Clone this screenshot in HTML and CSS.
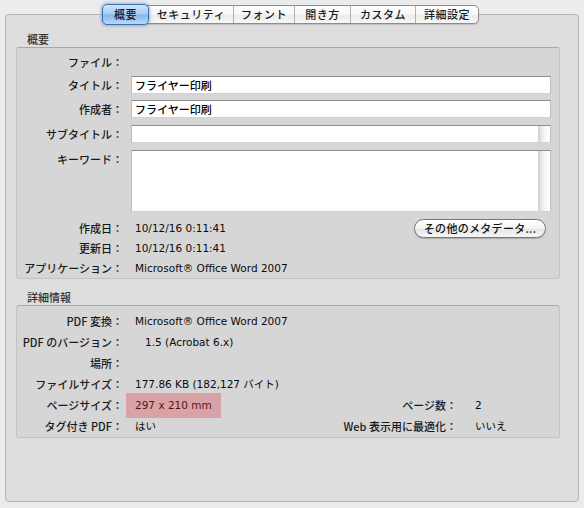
FILE: index.html
```html
<!DOCTYPE html>
<html lang="ja">
<head>
<meta charset="utf-8">
<title>文書のプロパティ</title>
<link rel="stylesheet" href="styles.css">
</head>
<body>
<div class="window">
  <div class="tabs">
    <div class="tab selected">概要</div>
    <div class="tab">セキュリティ</div>
    <div class="tab">フォント</div>
    <div class="tab">開き方</div>
    <div class="tab">カスタム</div>
    <div class="tab">詳細設定</div>
  </div>
  <div class="panel">
    <div class="sec-title">概要</div>
    <div class="box summary">
      <div class="row r-file"><div class="lbl">ファイル：</div><div class="val"></div></div>
      <div class="row r-title"><div class="lbl">タイトル：</div><div class="field">フライヤー印刷</div></div>
      <div class="row r-author"><div class="lbl">作成者：</div><div class="field">フライヤー印刷</div></div>
      <div class="row r-subtitle"><div class="lbl">サブタイトル：</div><div class="field scroll"></div></div>
      <div class="row r-keywords"><div class="lbl">キーワード：</div><div class="field scroll area"></div></div>
      <div class="row r-info first"><div class="lbl">作成日：</div><div class="val split"><span>10/12/16 0:11:41</span><button class="btn" type="button">その他のメタデータ...</button></div></div>
      <div class="row r-info"><div class="lbl">更新日：</div><div class="val">10/12/16 0:11:41</div></div>
      <div class="row r-info"><div class="lbl">アプリケーション：</div><div class="val">Microsoft® Office Word 2007</div></div>
    </div>
    <div class="sec-title second">詳細情報</div>
    <div class="box details">
      <div class="lbl d-lbl">PDF 変換：</div><div class="val d-val">Microsoft® Office Word 2007</div>
      <div class="lbl d-lbl">PDF のバージョン：</div><div class="val d-val indent">1.5 (Acrobat 6.x)</div>
      <div class="lbl d-lbl">場所：</div><div class="val d-val"></div>
      <div class="lbl d-lbl">ファイルサイズ：</div><div class="val d-val">177.86 KB (182,127 バイト)</div>
      <div class="lbl d-lbl">ページサイズ：</div><div class="val d-val"><span class="hl">297 x 210 mm</span></div>
      <div class="lbl r-lbl">ページ数：</div><div class="val r-val">2</div>
      <div class="lbl d-lbl">タグ付き PDF：</div><div class="val d-val">はい</div>
      <div class="lbl r-lbl">Web 表示用に最適化：</div><div class="val r-val">いいえ</div>
    </div>
  </div>
</div>
</body>
</html>
```
FILE: styles.css
```css
* { box-sizing: border-box; }
html, body { margin: 0; padding: 0; }
body {
  background: #ececec;
  font-family: "Noto Sans CJK JP", "Noto Sans", sans-serif;
  font-size: 11px;
  font-weight: 500;
  color: #111;
}
.window {
  height: 508px;
  padding: 5px 5px 6px 5px;
  display: flex;
  flex-direction: column;
}
.tabs {
  position: relative;
  z-index: 1;
  align-self: flex-start;
  margin-left: 97px;
  margin-bottom: -10px;
  display: grid;
  grid-template-columns: 46px 84px 61px 56px 65px 63px;
  height: 19px;
  border: 1px solid #8c8c8c;
  border-radius: 5px;
  background: linear-gradient(#ffffff, #f6f6f6 50%, #ebebeb 52%, #f7f7f7);
  box-shadow: 0 1px 1px rgba(0,0,0,0.15);
}
.tab {
  display: flex;
  align-items: center;
  justify-content: center;
  line-height: 17px;
  border-left: 1px solid #b2b2b2;
  color: #1a1a1a;
  letter-spacing: 0.5px;
}
.tab:first-child { border-left: none; }
.tab.selected {
  margin: -2px 0 -2px -1px;
  border: 1px solid #3f6fb4;
  border-radius: 5px;
  background: linear-gradient(#d3e5fa, #a7cbf4 48%, #86b5ee 52%, #b9d9f9);
  box-shadow: 0 0 3px 1px rgba(70,130,215,0.55);
}
.tab.selected + .tab { border-left: none; }
.panel {
  flex: 1;
  border: 1px solid #b4b4b4;
  border-radius: 4px;
  background: #dedede;
  padding: 16px 18px 0 10px;
}
.sec-title {
  line-height: 16px;
  height: 16px;
  margin-left: 11px;
  color: #333;
}
.sec-title.second { margin-top: 10px; }
.box {
  background: #d6d6d6;
  border: 1px solid #c2c2c2;
  border-top-color: #a8a8a8;
  border-radius: 3px;
}
.summary {
  padding: 5px 8px 0 0;
  display: flex;
  flex-direction: column;
}
.row {
  display: grid;
  grid-template-columns: 114px 1fr;
  height: 18px;
}
.lbl {
  text-align: right;
  padding-right: 8px;
  white-space: nowrap;
  color: #1a1a1a;
}
.row .lbl { line-height: 18px; }
.val {
  padding-left: 4px;
  font-family: "DejaVu Sans", "Noto Sans CJK JP", sans-serif;
  font-size: 10.5px;
  font-weight: 400;
  white-space: nowrap;
  color: #0a0a0a;
}
.row .val { line-height: 18px; }
.r-title { margin-top: 5px; }
.r-author { margin-top: 6px; }
.r-subtitle { margin-top: 7px; }
.r-keywords { margin-top: 7px; height: 62px; }
.r-info { height: 19px; margin-top: 1px; }
.r-info.first { margin-top: 7px; }
.r-info .lbl, .r-info .val { line-height: 19px; }
.field {
  background: #fff;
  border: 1px solid #bcbcbc;
  border-top-color: #8f8f8f;
  border-bottom-color: #d2d2d2;
  padding-left: 3px;
  line-height: 16px;
  color: #000;
}
.field.scroll {
  background: linear-gradient(to right, #fff calc(100% - 12px), #cfcfcf calc(100% - 12px), #ececec calc(100% - 8px), #fbfbfb calc(100% - 3px), #fff);
}
.split {
  display: flex;
  justify-content: space-between;
  align-items: center;
}
.btn {
  width: 132px;
  height: 19px;
  margin-right: 5px;
  padding: 0;
  border: 1px solid #777;
  border-radius: 10px;
  background: linear-gradient(#ffffff, #f4f4f4 50%, #e6e6e6 52%, #f6f6f6);
  box-shadow: 0 1px 1px rgba(0,0,0,0.2);
  font-family: "Noto Sans CJK JP", sans-serif;
  font-size: 11px;
  font-weight: 500;
  line-height: 17px;
  color: #111;
  letter-spacing: 0.3px;
}
.details {
  padding-top: 5px;
  display: grid;
  grid-template-columns: 114px 1fr 140px 84px;
  grid-auto-rows: 21px;
}
.details .lbl, .details .val { line-height: 21px; }
.d-lbl { grid-column: 1; }
.d-val { grid-column: 2; }
.r-lbl { grid-column: 3; padding-right: 18px; }
.r-val { grid-column: 4; padding-left: 0; }
.indent { padding-left: 14px; }
.hl {
  display: inline-block;
  margin: -2px 0 -2px -9px;
  padding: 2px 9px;
  height: 25px;
  line-height: 21px;
  background: #d9a2a6;
  color: #5a1414;
  vertical-align: top;
}
```
